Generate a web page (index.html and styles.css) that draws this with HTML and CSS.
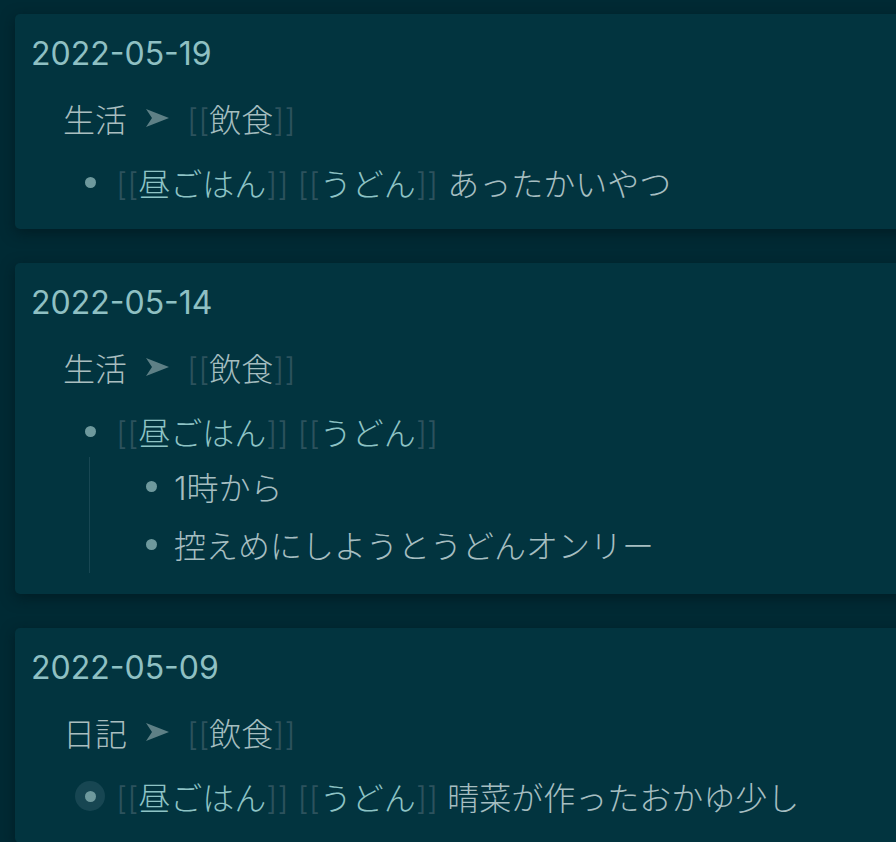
FILE: index.html
```html
<!DOCTYPE html>
<html lang="ja">
<head>
<meta charset="utf-8">
<title>飲食</title>
<link rel="stylesheet" href="styles.css">
</head>
<body>
<main class="page">
  <section class="card">
    <div class="date">2022-05-19</div>
    <div class="crumb">
      <span class="crumb-parent">生活</span>
      <svg class="sep" viewBox="0 0 23 18" width="23" height="18"><polygon points="0,0 23,9 0,18 6,9"/></svg>
      <span class="ref"><span class="br">[[</span><span class="link">飲食</span><span class="br">]]</span></span>
    </div>
    <ul class="blocks">
      <li class="block">
        <div class="row"><span class="bullet"><span class="dot"></span></span><span class="content"><span class="ref"><span class="br">[[</span><span class="page-link">昼ごはん</span><span class="br">]]</span></span> <span class="ref"><span class="br">[[</span><span class="page-link">うどん</span><span class="br">]]</span></span> あったかいやつ</span></div>
      </li>
    </ul>
  </section>

  <section class="card">
    <div class="date">2022-05-14</div>
    <div class="crumb">
      <span class="crumb-parent">生活</span>
      <svg class="sep" viewBox="0 0 23 18" width="23" height="18"><polygon points="0,0 23,9 0,18 6,9"/></svg>
      <span class="ref"><span class="br">[[</span><span class="link">飲食</span><span class="br">]]</span></span>
    </div>
    <ul class="blocks">
      <li class="block">
        <div class="row"><span class="bullet"><span class="dot"></span></span><span class="content"><span class="ref"><span class="br">[[</span><span class="page-link">昼ごはん</span><span class="br">]]</span></span> <span class="ref"><span class="br">[[</span><span class="page-link">うどん</span><span class="br">]]</span></span></span></div>
        <ul class="children">
          <li class="block">
            <div class="row"><span class="bullet"><span class="dot"></span></span><span class="content plain">1時から</span></div>
          </li>
          <li class="block">
            <div class="row"><span class="bullet"><span class="dot"></span></span><span class="content plain">控えめにしようとうどんオンリー</span></div>
          </li>
        </ul>
      </li>
    </ul>
  </section>

  <section class="card">
    <div class="date">2022-05-09</div>
    <div class="crumb">
      <span class="crumb-parent">日記</span>
      <svg class="sep" viewBox="0 0 23 18" width="23" height="18"><polygon points="0,0 23,9 0,18 6,9"/></svg>
      <span class="ref"><span class="br">[[</span><span class="link">飲食</span><span class="br">]]</span></span>
    </div>
    <ul class="blocks">
      <li class="block">
        <div class="row"><span class="bullet collapsed"><span class="dot"></span></span><span class="content"><span class="ref"><span class="br">[[</span><span class="page-link">昼ごはん</span><span class="br">]]</span></span> <span class="ref"><span class="br">[[</span><span class="page-link">うどん</span><span class="br">]]</span></span> 晴菜が作ったおかゆ少し</span></div>
      </li>
    </ul>
  </section>
</main>
</body>
</html>
```

FILE: styles.css
```css
html, body {
  margin: 0;
  padding: 0;
  background: #002a34;
  overflow: hidden;
}

body {
  font-family: Inter, "Noto Sans CJK JP", sans-serif;
  font-size: 32px;
  font-weight: 300;
  color: #a6bec1;
}

.page {
  display: flex;
  flex-direction: column;
  gap: 34px;
  padding: 14px 0 0 15px;
}

.card {
  background: #02343f;
  border-radius: 5px 0 0 5px;
  margin-right: -10px;
  padding: 20px 16px 18px 16px;
  box-shadow: 0 4px 14px rgba(0, 18, 24, 0.55);
}

.date {
  height: 40px;
  line-height: 40px;
  font-weight: 400;
  color: #8fc0c3;
}

.crumb {
  display: flex;
  align-items: center;
  height: 46px;
  margin-top: 21px;
  padding-left: 32px;
  color: #a9bebf;
}

.crumb-parent {
  color: #a9bebf;
}

.sep {
  fill: #5e8086;
  margin: 0 18px 0 19px;
  flex: none;
}

.br {
  color: #2c525d;
}

.link {
  color: #a4bdbf;
}

.page-link {
  color: #8ec3c5;
}

.blocks {
  list-style: none;
  margin: 12px 0 0 0;
  padding: 0 0 0 44px;
}

.children {
  list-style: none;
  margin: -3px 0 3px 14px;
  padding: 0 0 0 46px;
  border-left: 1px solid #184753;
}

.row {
  display: flex;
  align-items: center;
  height: 58px;
}

.bullet {
  flex: none;
  width: 30px;
  height: 30px;
  border-radius: 50%;
  display: flex;
  align-items: center;
  justify-content: center;
}

.bullet.collapsed {
  background: #174652;
}

.dot {
  width: 11px;
  height: 11px;
  border-radius: 50%;
  background: #6e999d;
}

.content {
  margin-left: 11px;
  white-space: nowrap;
  color: #a6bec1;
}

.content.plain {
  margin-left: 8px;
}
```
